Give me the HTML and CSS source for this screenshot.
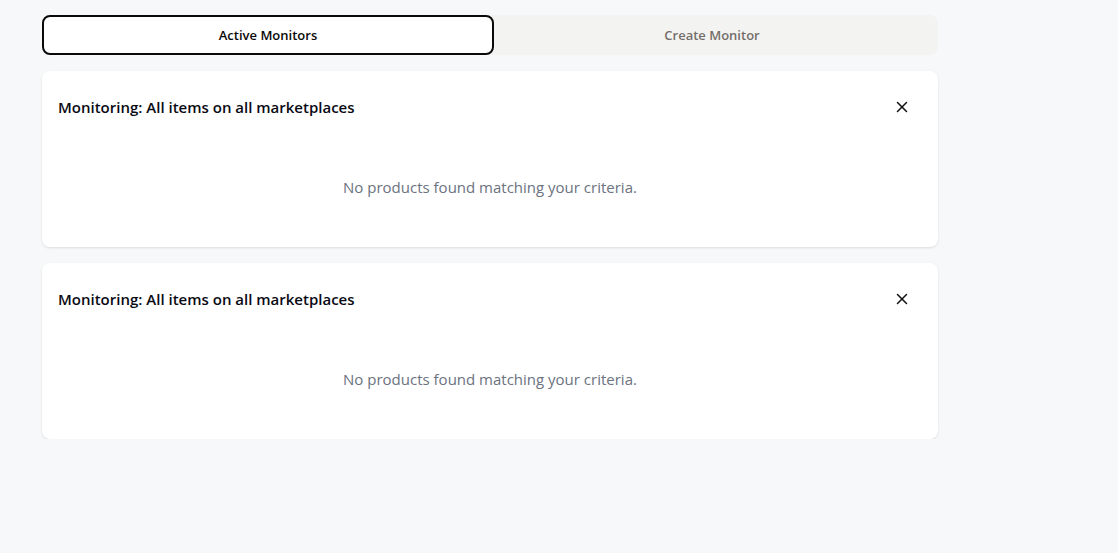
FILE: index.html
```html
<!DOCTYPE html>
<html lang="en">
<head>
<meta charset="utf-8">
<title>Monitors</title>
<link rel="stylesheet" href="styles.css">
</head>
<body>
<main class="page">
  <div class="tabs">
    <button class="tab tab-active">Active Monitors</button>
    <button class="tab tab-idle">Create Monitor</button>
  </div>
  <section class="card">
    <div class="card-header">
      <h2 class="card-title">Monitoring: All items on all marketplaces</h2>
      <button class="close" aria-label="Remove monitor">
        <svg width="18" height="18" viewBox="0 0 24 24" fill="none" stroke="currentColor" stroke-width="2" stroke-linecap="round" stroke-linejoin="round"><path d="M18 6 6 18"/><path d="m6 6 12 12"/></svg>
      </button>
    </div>
    <div class="card-body">
      <p class="empty">No products found matching your criteria.</p>
    </div>
  </section>
  <section class="card">
    <div class="card-header">
      <h2 class="card-title">Monitoring: All items on all marketplaces</h2>
      <button class="close" aria-label="Remove monitor">
        <svg width="18" height="18" viewBox="0 0 24 24" fill="none" stroke="currentColor" stroke-width="2" stroke-linecap="round" stroke-linejoin="round"><path d="M18 6 6 18"/><path d="m6 6 12 12"/></svg>
      </button>
    </div>
    <div class="card-body">
      <p class="empty">No products found matching your criteria.</p>
    </div>
  </section>
</main>
</body>
</html>
```

FILE: styles.css
```css
* { box-sizing: border-box; }
html, body { margin: 0; padding: 0; }
body {
  background: #f7f8f9;
  font-family: "Open Sans", "Noto Sans", sans-serif;
  color: #0a0a0a;
}
.page {
  width: 896px;
  margin-left: 42px;
  padding-top: 15px;
  display: flex;
  flex-direction: column;
  gap: 16px;
}
.tabs {
  display: grid;
  grid-template-columns: 452px 1fr;
  height: 40px;
  background: #f3f3f2;
  border-radius: 8px;
}
.tab {
  font-family: inherit;
  font-size: 13px;
  font-weight: 600;
  color: #736e69;
  background: transparent;
  border: 0;
  border-radius: 8px;
  cursor: pointer;
  padding: 0;
}
.tab-idle {
  padding-right: 8px;
}
.tab-active {
  background: #fff;
  color: #0a0a0a;
  border: 2px solid #0a0a0a;
}
.card {
  background: #fff;
  border-radius: 8px;
  box-shadow: 0 1px 3px rgba(0,0,0,0.08), 0 1px 2px rgba(0,0,0,0.04);
  padding: 0 16px 16px;
}
.card-header {
  height: 72px;
  display: flex;
  align-items: center;
  justify-content: space-between;
}
.card-title {
  margin: 0;
  font-size: 15px;
  font-weight: 600;
  color: #0a0a14;
}
.close {
  width: 40px;
  height: 40px;
  border: 0;
  background: transparent;
  display: flex;
  align-items: center;
  justify-content: center;
  color: #111;
  padding: 0;
  border-radius: 6px;
}
.card-body {
  padding: 32px 0;
}
.empty {
  margin: 0;
  text-align: center;
  font-size: 15px;
  line-height: 24px;
  color: #6b7280;
}
```
